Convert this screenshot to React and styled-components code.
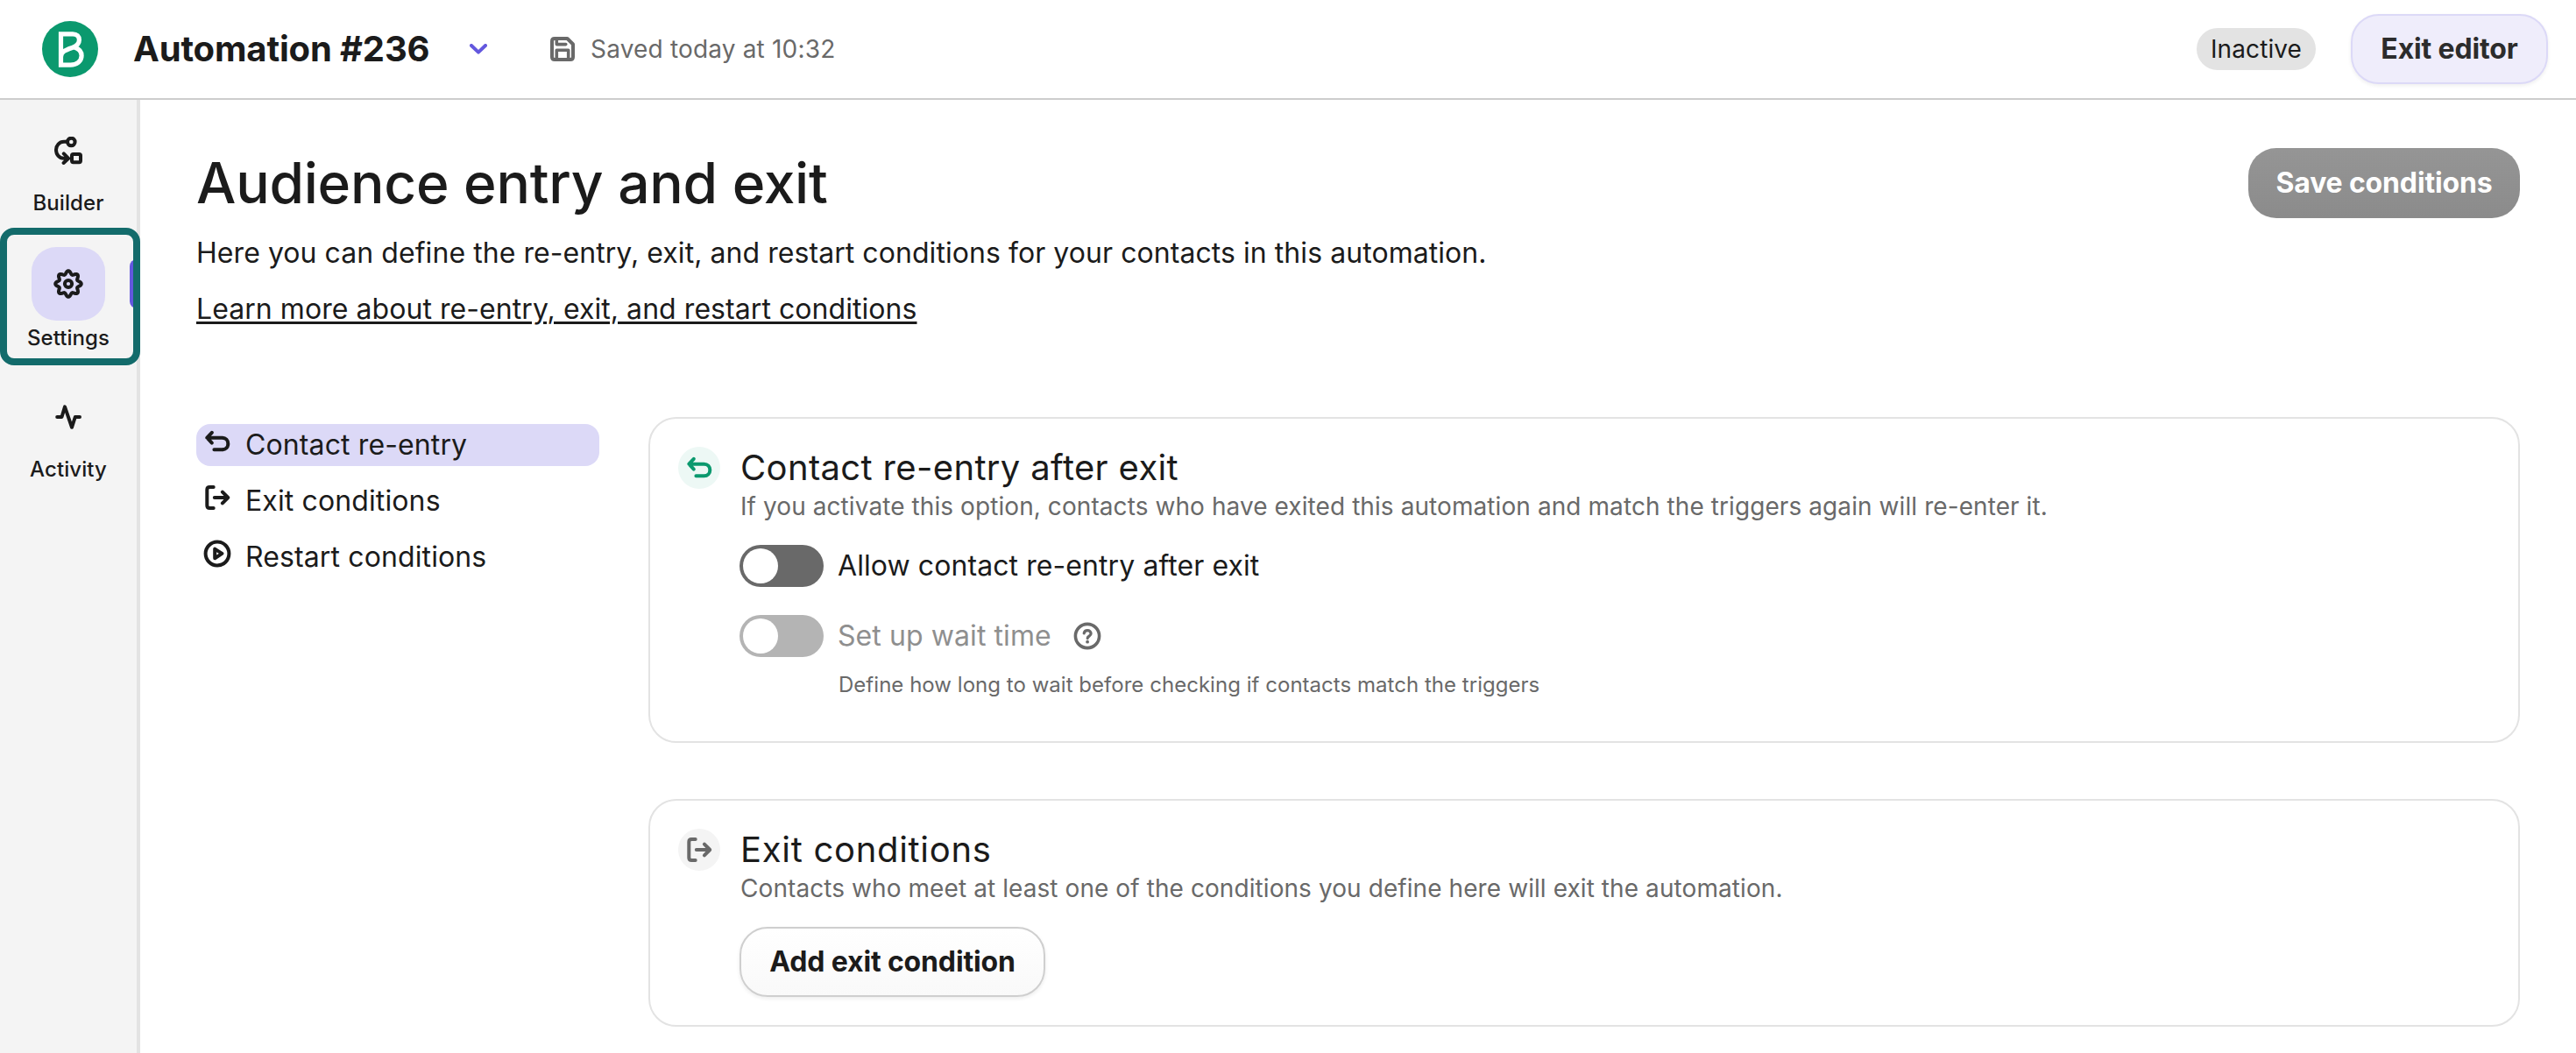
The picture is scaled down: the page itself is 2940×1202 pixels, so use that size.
import React from 'react';
import styled, { createGlobalStyle } from 'styled-components';

const gearPath = () => {
	const points = [];
	for (let i = 0; i < 96; i++) {
		const a = (i / 96) * Math.PI * 2;
		const r = 12.9 + 1.9 * Math.cos(8 * a);
		points.push(`${(18 + r * Math.cos(a)).toFixed(2)} ${(18 + r * Math.sin(a)).toFixed(2)}`);
	}
	return `M${points.join('L')}Z`;
};

const BrandLogo = () => (
	<svg width="64" height="64" viewBox="0 0 64 64" fill="none">
		<circle cx="32" cy="32" r="32" fill="#0b996e" />
		<path
			d="M21.5 41V14.9H35C39.8 14.9 42.4 17.5 42.4 21.6C42.4 26 39.5 28.6 35 30.2C28 32.7 21.5 34.5 21.5 41V50.2H32.5C39.5 50.2 45.1 46 45.1 39.6C45.1 35 42 31.5 37 29.9"
			stroke="#fff"
			strokeWidth="5.2"
		/>
	</svg>
);

const ChevronIcon = () => (
	<Icon width="20" height="12" viewBox="0 0 20 12">
		<path d="M2 2L10 9.6L18 2" />
	</Icon>
);

const SaveIcon = () => (
	<Icon width="28" height="28" viewBox="0 0 28 28">
		<path d="M2 5Q2 2 5 2H19.5L26 8.5V23Q26 26 23 26H5Q2 26 2 23Z" />
		<path d="M7.3 25V15.2H20.7V25M7.3 3V8.6H17.8" strokeWidth="3.6" />
	</Icon>
);

const BuilderIcon = () => (
	<Icon width="32" height="32" viewBox="0 0 32 32">
		<circle cx="19.3" cy="6" r="4.3" />
		<rect x="20" y="20" width="10" height="9.2" rx="1.6" />
		<path d="M14.5 5.8H11C5.6 5.8 2 10 2 15C2 20.4 5.6 24.8 11 24.8H15.5M10.8 19.4L16.2 24.8L10.6 30" />
	</Icon>
);

const GearIcon = () => (
	<Icon width="36" height="36" viewBox="0 0 36 36">
		<path d={gearPath()} />
		<circle cx="18" cy="18" r="4.1" />
	</Icon>
);

const ActivityIcon = () => (
	<Icon width="32" height="28" viewBox="0 0 32 28">
		<path d="M3.2 14H8.5L12 2.4L20 25.8L23.8 14H29" />
	</Icon>
);

const ReturnIcon = () => (
	<Icon width="32" height="32" viewBox="0 0 32 32">
		<path d="M4.5 11.7H21.5C25.6 11.7 28.3 14.6 28.3 18.5S25.6 25.3 21.5 25.3H12.4M9.8 5.8L4.3 11.7L9.8 17.6" />
	</Icon>
);

const ExitIcon = () => (
	<Icon width="32" height="32" viewBox="0 0 32 32">
		<path d="M11.7 4H7.3Q4.3 4 4.3 7V25Q4.3 28 7.3 28H11.7M12.8 16H28M21.9 9.6L28.2 16L21.9 22.4" />
	</Icon>
);

const PlayIcon = () => (
	<Icon width="32" height="32" viewBox="0 0 32 32">
		<circle cx="16" cy="16" r="13.4" />
		<path d="M13.2 10.6V21.2L21.4 15.9Z" />
	</Icon>
);

const HelpIcon = () => (
	<Icon width="32" height="32" viewBox="0 0 32 32">
		<circle cx="16" cy="16" r="13.6" strokeWidth="3.6" />
		<path d="M12.2 12.9C12.6 11.1 14.1 9.7 16.1 9.7C18.4 9.7 20.1 11.2 20.1 13.3C20.1 16 16.2 16.2 16.2 18.6" strokeWidth="3.2" />
		<circle cx="16.1" cy="22.7" r="1.9" fill="currentColor" stroke="none" />
	</Icon>
);

const sideItems = [
	{ label: 'Builder', icon: <BuilderIcon /> },
	{ label: 'Settings', icon: <GearIcon />, active: true },
	{ label: 'Activity', icon: <ActivityIcon /> },
];

const sections = [
	{ label: 'Contact re-entry', icon: <ReturnIcon />, active: true },
	{ label: 'Exit conditions', icon: <ExitIcon /> },
	{ label: 'Restart conditions', icon: <PlayIcon /> },
];

const App = () => {
	return (
		<React.Fragment>
			<GlobalStyle />
			<Header>
				<BrandLogo />
				<AutomationName>Automation #236</AutomationName>
				<NameToggle>
					<ChevronIcon />
				</NameToggle>
				<SavedInfo>
					<SaveIcon />
					<span>Saved today at 10:32</span>
				</SavedInfo>
				<StatusBadge>Inactive</StatusBadge>
				<Button $variant="soft" $width={225}>Exit editor</Button>
			</Header>
			<Layout>
				<Sidebar>
					{sideItems.map((item) => (
						<SideItem key={item.label} $active={item.active}>
							<SideIcon $active={item.active}>{item.icon}</SideIcon>
							<span>{item.label}</span>
							{item.active && <ActiveMarker />}
							{item.active && <FocusFrame />}
						</SideItem>
					))}
				</Sidebar>
				<Main>
					<PageHead>
						<div>
							<PageTitle>Audience entry and exit</PageTitle>
							<Intro>Here you can define the re-entry, exit, and restart conditions for your contacts in this automation.</Intro>
							<LearnMore>Learn more about re-entry, exit, and restart conditions</LearnMore>
						</div>
						<Button $variant="disabled" $width={310}>Save conditions</Button>
					</PageHead>
					<Columns>
						<SectionNav>
							{sections.map((section) => (
								<SectionLink key={section.label} $active={section.active}>
									{section.icon}
									<span>{section.label}</span>
								</SectionLink>
							))}
						</SectionNav>
						<Cards>
							<Card $bottom={48}>
								<CardBadge $tone="green">
									<ReturnIcon />
								</CardBadge>
								<CardBody>
									<CardTitle $spacing={0.35}>Contact re-entry after exit</CardTitle>
									<CardText>
										If you activate this option, contacts who have exited this automation and match the triggers again will re-enter it.
									</CardText>
									<SwitchRow>
										<Switch />
										<span>Allow contact re-entry after exit</span>
									</SwitchRow>
									<SwitchRow $disabled>
										<Switch $disabled />
										<span>Set up wait time</span>
										<HelpButton>
											<HelpIcon />
										</HelpButton>
									</SwitchRow>
									<Hint>Define how long to wait before checking if contacts match the triggers</Hint>
								</CardBody>
							</Card>
							<Card $bottom={32}>
								<CardBadge>
									<ExitIcon />
								</CardBadge>
								<CardBody>
									<CardTitle $spacing={0.7}>Exit conditions</CardTitle>
									<CardText>Contacts who meet at least one of the conditions you define here will exit the automation.</CardText>
									<Button $variant="outline" $width={349}>Add exit condition</Button>
								</CardBody>
							</Card>
						</Cards>
					</Columns>
				</Main>
			</Layout>
		</React.Fragment>
	);
};

export default App;

const GlobalStyle = createGlobalStyle`
	* {
		box-sizing: border-box;
	}
	body {
		margin: 0;
		background-color: #fff;
		color: #1b1b1b;
		font-family: Inter, 'Liberation Sans', sans-serif;
		font-size: 32px;
		line-height: 48px;
		letter-spacing: 0.08px;
		overflow: hidden;
	}
`;

const Icon = styled.svg.attrs({ fill: 'none', strokeWidth: 4, strokeLinecap: 'round', strokeLinejoin: 'round' })`
	display: block;
	flex-shrink: 0;
	stroke: currentColor;
`;

const Header = styled.header`
	height: 114px;
	padding: 0 32px 0 48px;
	border-bottom: 2px solid #cdcdcd;
	display: flex;
	align-items: center;
`;

const AutomationName = styled.div`
	width: 338px;
	margin-left: 40px;
	font-size: 40px;
	font-weight: 700;
	letter-spacing: -0.15px;
	white-space: nowrap;
`;

const NameToggle = styled.div`
	margin-left: 46px;
	color: #6358de;
`;

const SavedInfo = styled.div`
	margin: 0 auto 0 72px;
	display: flex;
	align-items: center;
	gap: 18px;
	color: #696969;
	font-size: 28px;
	letter-spacing: 0.18px;
`;

const StatusBadge = styled.div`
	width: 136px;
	height: 48px;
	margin-right: 40px;
	border-radius: 24px;
	background-color: #e3e3e3;
	font-size: 28px;
	letter-spacing: 0.1px;
	text-align: center;
`;

const variants = {
	soft: `
		border: 2px solid #dcd9f7;
		background: #efedfb;
		color: #2c2c2c;
		box-shadow: 0 2px 4px rgba(27, 27, 27, 0.07);
	`,
	outline: `
		margin-top: 24px;
		border: 2px solid #cfcfcf;
		background: linear-gradient(#fff, #f9f9f9);
		color: #1b1b1b;
		box-shadow: 0 2px 4px rgba(27, 27, 27, 0.08);
	`,
	disabled: `
		border: none;
		background: linear-gradient(#959595, #8b8b8b);
		color: #fff;
	`,
};

const Button = styled.button`
	display: block;
	width: ${({ $width }) => $width}px;
	height: 80px;
	padding: 0;
	border-radius: 32px;
	font: inherit;
	font-weight: 700;
	letter-spacing: -0.15px;
	${({ $variant }) => variants[$variant]}
`;

const Layout = styled.div`
	display: flex;
	height: 1088px;
`;

const Sidebar = styled.nav`
	width: 160px;
	padding-top: 16px;
	border-right: 4px solid #e3e3e3;
	background-color: #f4f4f4;
	display: flex;
	flex-direction: column;
	gap: 32px;
`;

const SideItem = styled.div`
	position: relative;
	height: 120px;
	display: flex;
	flex-direction: column;
	align-items: center;
	gap: ${({ $active }) => ($active ? 4 : 2)}px;
	font-size: 24px;
	font-weight: 500;
	line-height: 32px;
`;

const SideIcon = styled.div`
	width: 84px;
	height: 84px;
	border-radius: 28px;
	background-color: ${({ $active }) => ($active ? '#dcd9f7' : 'transparent')};
	display: flex;
	align-items: center;
	justify-content: center;
`;

const ActiveMarker = styled.div`
	position: absolute;
	top: 14px;
	right: 0;
	width: 8px;
	height: 56px;
	border-radius: 8px 0 0 8px;
	background-color: #6358de;
`;

const FocusFrame = styled.div`
	position: absolute;
	top: -22px;
	left: 0;
	width: 160px;
	height: 157px;
	border: 8px solid #136b6b;
	border-radius: 16px;
`;

const Main = styled.main`
	flex: 1;
	padding: 55px 64px 0;
`;

const PageHead = styled.div`
	display: flex;
	align-items: flex-start;
	justify-content: space-between;
`;

const PageTitle = styled.h1`
	margin: 0;
	font-size: 64px;
	font-weight: 500;
	line-height: 80px;
	letter-spacing: -0.24px;
`;

const Intro = styled.p`
	margin: 16px 0;
	letter-spacing: 0.06px;
`;

const LearnMore = styled.a`
	display: block;
	letter-spacing: 0.06px;
	text-decoration: underline;
	text-decoration-thickness: 3px;
	text-underline-offset: 3px;
`;

const Columns = styled.div`
	margin-top: 99px;
	display: flex;
	gap: 56px;
`;

const SectionNav = styled.div`
	width: 460px;
	padding-top: 8px;
	display: flex;
	flex-direction: column;
	gap: 16px;
`;

const SectionLink = styled.div`
	height: 48px;
	padding-left: 8px;
	border-radius: 16px;
	background-color: ${({ $active }) => ($active ? '#dcd9f7' : 'transparent')};
	display: flex;
	align-items: center;
	gap: 16px;
	letter-spacing: 0.12px;
	svg {
		margin-bottom: 8px;
	}
`;

const Cards = styled.div`
	flex: 1;
	display: flex;
	flex-direction: column;
	gap: 64px;
`;

const Card = styled.section`
	padding: 32px 32px ${({ $bottom }) => $bottom}px;
	border: 2px solid #e3e3e3;
	border-radius: 32px;
	display: flex;
	gap: 22px;
`;

const CardBadge = styled.div`
	width: 48px;
	height: 48px;
	border-radius: 50%;
	background-color: ${({ $tone }) => ($tone === 'green' ? '#edf8f5' : '#f4f4f4')};
	color: ${({ $tone }) => ($tone === 'green' ? '#0b996e' : '#696969')};
	display: flex;
	align-items: center;
	justify-content: center;
`;

const CardBody = styled.div`
	flex: 1;
`;

const CardTitle = styled.h2`
	margin: 0 0 0 1px;
	font-size: 40px;
	font-weight: 400;
	line-height: 48px;
	letter-spacing: ${({ $spacing }) => $spacing}px;
`;

const CardText = styled.p`
	margin: 0 0 0 1px;
	color: #696969;
	font-size: 28px;
	line-height: 40px;
`;

const SwitchRow = styled.div`
	margin-top: ${({ $disabled }) => ($disabled ? 32 : 24)}px;
	display: flex;
	align-items: center;
	gap: 16px;
	color: ${({ $disabled }) => ($disabled ? '#8f8f8f' : '#1b1b1b')};
`;

const Switch = styled.div`
	width: 96px;
	height: 48px;
	padding: 4px;
	border-radius: 24px;
	background-color: ${({ $disabled }) => ($disabled ? '#b4b4b4' : '#696969')};
	&::before {
		content: '';
		display: block;
		width: 40px;
		height: 40px;
		border-radius: 50%;
		background-color: #fff;
	}
`;

const HelpButton = styled.div`
	margin-left: 9px;
	color: #696969;
`;

const Hint = styled.p`
	margin: 16px 0 0 113px;
	color: #696969;
	font-size: 24px;
	line-height: 32px;
	letter-spacing: 0.03px;
`;
